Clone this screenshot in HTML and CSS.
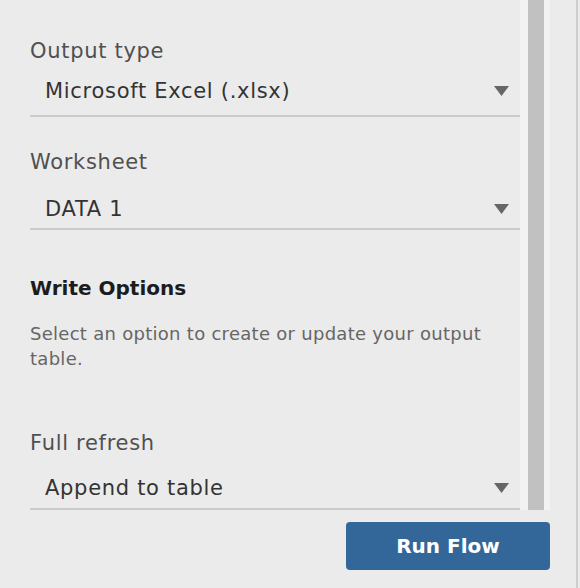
FILE: index.html
```html
<!DOCTYPE html>
<html lang="en">
<head>
<meta charset="utf-8">
<title>Output settings</title>
<link rel="stylesheet" href="styles.css">
</head>
<body>
<div class="app">
  <div class="top">
    <div class="panel">
      <div class="field field-first">
        <div class="label">Output type</div>
        <div class="dropdown dd-first">
          <span class="value">Microsoft Excel (.xlsx)</span>
          <svg class="caret" width="15" height="10" viewBox="0 0 15 10"><polygon points="0,0 15,0 7.5,10" fill="#666"/></svg>
        </div>
      </div>
      <div class="field field-second">
        <div class="label">Worksheet</div>
        <div class="dropdown dd-second">
          <span class="value">DATA 1</span>
          <svg class="caret" width="15" height="10" viewBox="0 0 15 10"><polygon points="0,0 15,0 7.5,10" fill="#666"/></svg>
        </div>
      </div>
      <h2 class="heading">Write Options</h2>
      <p class="desc">Select an option to create or update your output table.</p>
      <div class="field field-third">
        <div class="label">Full refresh</div>
        <div class="dropdown dd-third">
          <span class="value">Append to table</span>
          <svg class="caret" width="15" height="10" viewBox="0 0 15 10"><polygon points="0,0 15,0 7.5,10" fill="#666"/></svg>
        </div>
      </div>
    </div>
    <div class="scrollbar"><div class="thumb"></div></div>
  </div>
  <div class="footer">
    <button class="run">Run Flow</button>
  </div>
</div>
</body>
</html>
```
FILE: styles.css
```css
html, body {
  margin: 0;
  padding: 0;
  background: #ebebeb;
}
body {
  font-family: "DejaVu Sans", Verdana, sans-serif;
  color: #333;
}
.app {
  width: 578px;
  height: 588px;
  box-sizing: border-box;
  border-right: 2px solid #cdcdcd;
  display: flex;
  flex-direction: column;
}
.top {
  display: flex;
  height: 510px;
}
.panel {
  width: 520px;
  box-sizing: border-box;
  padding-left: 30px;
  display: flex;
  flex-direction: column;
}
.scrollbar {
  width: 30px;
  background: #f2f2f2;
  display: flex;
  padding-left: 8px;
  box-sizing: border-box;
}
.thumb {
  width: 16px;
  background: #c1c1c1;
}
.label {
  font-size: 21px;
  line-height: 24px;
  letter-spacing: 0.7px;
  color: #505050;
}
.dropdown {
  display: flex;
  align-items: center;
  justify-content: space-between;
  padding-left: 15px;
  padding-right: 11px;
  border-bottom: 2px solid #cbcbcb;
}
.value {
  font-size: 21px;
  line-height: 24px;
  letter-spacing: 0.7px;
  color: #333;
}
.caret {
  display: block;
}
.field-first { margin-top: 39px; }
.dd-first { padding-top: 16px; padding-bottom: 12px; }
.field-second { margin-top: 33px; }
.dd-second { padding-top: 23px; padding-bottom: 7px; }
.heading {
  margin: 46px 0 0;
  font-size: 20px;
  line-height: 24px;
  font-weight: 700;
  color: #1c1c1c;
}
.desc {
  margin: 21px 0 0;
  font-size: 18px;
  line-height: 25px;
  letter-spacing: 0.28px;
  color: #666;
  padding-right: 20px;
}
.field-third { margin-top: 60px; }
.dd-third { padding-top: 21px; padding-bottom: 8px; }
.footer {
  display: flex;
  justify-content: flex-end;
  padding-top: 12px;
  padding-right: 26px;
}
.run {
  width: 204px;
  height: 48px;
  border: none;
  border-radius: 4px;
  background: #336799;
  color: #fff;
  font-family: "DejaVu Sans", Verdana, sans-serif;
  font-size: 20px;
  font-weight: 700;
  padding: 0;
}
```
